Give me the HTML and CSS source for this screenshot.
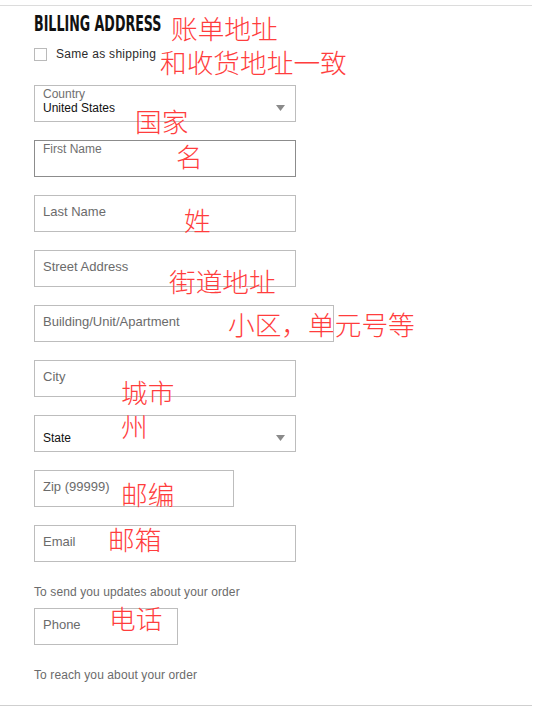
FILE: index.html
```html
<!DOCTYPE html>
<html lang="en">
<head>
<meta charset="utf-8">
<title>Billing Address</title>
<link rel="stylesheet" href="styles.css">
</head>
<body>
<div class="page">
  <div class="rule rule-top"></div>
  <form class="form">
    <h1 class="heading">BILLING ADDRESS</h1>
    <label class="check-row"><span class="checkbox"></span><span class="check-text">Same as shipping</span></label>

    <div class="fields">
      <div class="field select">
        <div class="select-text">
          <span class="float-label">Country</span>
          <span class="select-value">United States</span>
        </div>
        <svg class="caret" width="9" height="6" viewBox="0 0 9 6"><polygon points="0,0 9,0 4.5,6" fill="#8a8a8a"/></svg>
      </div>
      <div class="field focused"><span class="float-label">First Name</span></div>
      <div class="field"><span class="placeholder">Last Name</span></div>
      <div class="field"><span class="placeholder">Street Address</span></div>
      <div class="field wide"><span class="placeholder">Building/Unit/Apartment</span></div>
      <div class="field"><span class="placeholder">City</span></div>
      <div class="field select no-label">
        <div class="select-text">
          <span class="select-value">State</span>
        </div>
        <svg class="caret" width="9" height="6" viewBox="0 0 9 6"><polygon points="0,0 9,0 4.5,6" fill="#8a8a8a"/></svg>
      </div>
      <div class="field zip"><span class="placeholder">Zip (99999)</span></div>
      <div class="field"><span class="placeholder">Email</span></div>
    </div>
    <p class="hint">To send you updates about your order</p>
    <div class="field phone"><span class="placeholder">Phone</span></div>
    <p class="hint hint-last">To reach you about your order</p>
  </form>
  <div class="rule rule-bottom"></div>

  <span class="note n1">账单地址</span>
  <span class="note n2">和收货地址一致</span>
  <span class="note n3">国家</span>
  <span class="note n4">名</span>
  <span class="note n5">姓</span>
  <span class="note n6">街道地址</span>
  <span class="note n7">小区，单元号等</span>
  <span class="note n8">城市</span>
  <span class="note n9">州</span>
  <span class="note n10">邮编</span>
  <span class="note n11">邮箱</span>
  <span class="note n12">电话</span>
</div>
</body>
</html>
```

FILE: styles.css
```css
* { box-sizing: border-box; }

html, body {
  margin: 0;
  padding: 0;
  background: #fff;
}

body {
  font-family: "Liberation Sans", Arial, sans-serif;
  color: #111;
}

.page {
  position: relative;
  width: 533px;
  height: 711px;
  overflow: hidden;
}

.rule {
  width: 532px;
  height: 0;
}

.rule-top {
  margin-top: 5px;
  border-top: 1px solid #dcdcdc;
}

.rule-bottom {
  border-top: 1px solid #cfcfcf;
  margin-top: 23px;
}

.form {
  margin: 0;
  padding: 0 0 0 34px;
}

.heading {
  margin: 6px 0 0 0;
  font-family: "DejaVu Sans Condensed", "DejaVu Sans", sans-serif;
  font-stretch: condensed;
  font-weight: bold;
  font-size: 21px;
  line-height: 24px;
  color: #111;
  display: inline-block;
  transform: scaleX(0.67);
  transform-origin: left center;
  white-space: nowrap;
}

.check-row {
  margin-top: 12px;
  display: flex;
  align-items: center;
  height: 13px;
}

.checkbox {
  width: 13px;
  height: 13px;
  border: 1px solid #bababa;
  background: #fff;
  flex: none;
}

.check-text {
  margin-left: 9px;
  font-size: 12px;
  line-height: 13px;
  letter-spacing: 0.3px;
  color: #2b2b2b;
}

.fields {
  margin-top: 24px;
  display: flex;
  flex-direction: column;
  gap: 18px;
}

.field {
  width: 262px;
  height: 37px;
  border: 1px solid #bdbdbd;
  padding: 8px 8px 0 8px;
  background: #fff;
}

.field.wide { width: 300px; }
.field.zip { width: 200px; }
.field.phone { width: 144px; margin-top: 9px; }

.field.focused {
  border-color: #8c8c8c;
  padding-top: 1px;
}

.placeholder {
  display: block;
  font-size: 13px;
  line-height: 16px;
  color: #6b6b6b;
}

.float-label {
  display: block;
  font-size: 12px;
  line-height: 14px;
  color: #6f6f6f;
}

.field.select {
  display: flex;
  align-items: flex-start;
  padding: 1px 10px 0 8px;
}

.field.select.no-label {
  padding-top: 15px;
}

.select-text {
  flex: 1;
  display: flex;
  flex-direction: column;
}

.select-value {
  display: block;
  font-size: 12px;
  line-height: 14px;
  color: #111;
}

.caret {
  flex: none;
  display: block;
  margin-top: 18px;
}

.field.select.no-label .caret {
  margin-top: 4px;
}

.hint {
  margin: 23px 0 0 0;
  font-size: 12px;
  line-height: 14px;
  color: #6b6b6b;
  letter-spacing: 0.1px;
}

.hint-last {
  margin-top: 23px;
}

.note {
  position: absolute;
  font-family: "Noto Sans CJK SC", sans-serif;
  font-weight: 300;
  font-size: 26.7px;
  line-height: 26px;
  color: #ff3d3d;
  white-space: nowrap;
}

.n1 { left: 171px; top: 15px; }
.n2 { left: 160px; top: 49px; }
.n3 { left: 135px; top: 108px; }
.n4 { left: 176px; top: 143px; }
.n5 { left: 184px; top: 207px; }
.n6 { left: 169px; top: 268px; }
.n7 { left: 228px; top: 311px; }
.n8 { left: 121px; top: 379px; }
.n9 { left: 121px; top: 413px; }
.n10 { left: 121px; top: 481px; }
.n11 { left: 108px; top: 526px; }
.n12 { left: 109px; top: 605px; }
```
